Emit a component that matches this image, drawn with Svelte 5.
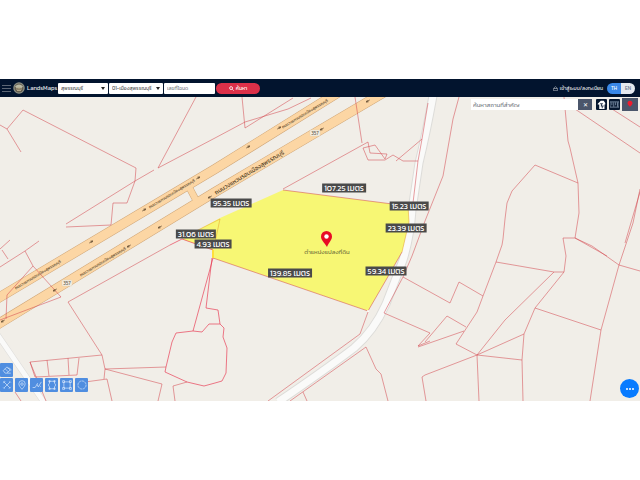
<script>
  const VIEW = { x: 0, y: 97, w: 640, h: 304 };

  const lines = [
    '111,225 113,203 127,203 135,181 136,168 23,110 7,129',
    '0,125 7,129 21,152',
    '66,224 135,181 154,170',
    '66,227 111,225',
    '196,97 158,168 215,138 245,122 288,109 311,98',
    '242,97 245,128 293,98',
    '0,249 10,240',
    '0,267 25,251 39,241',
    '2,250 8,259',
    '25,251 33,266 61,297 0,320',
    '33,266 7,295 6,319',
    '355,97 362,143',
    '283,189 368,142 370,153 387,154 385,159 375,145 363,148 368,160 385,160 393,155 403,161 418,161',
    '396,161 422,139',
    '428,103 422,139 418,161 413,203',
    '459,97 453,119 443,176 425,221 412,256 403,277 384,313 430,333 418,346 430,341',
    '403,277 450,303 459,282 483,296',
    '502,245 503,239 505,219 507,203 512,191 535,165 578,183',
    '564,97 568,141 570,148 578,183 579,213 575,238 563,238 566,256 564,272 535,308 524,334 522,360 523,401',
    '575,238 592,246 619,265 640,271',
    '575,238 607,256',
    '640,189 633,223 622,256 619,265 601,330 590,401',
    '640,192 625,243',
    '535,308 601,330',
    '575,109 640,153',
    '612,109 640,127',
    '502,245 496,262 483,296 477,312 456,344 477,355 479,401',
    '496,262 554,272 564,272',
    '554,272 505,320 477,355 524,334',
    '522,360 477,355 425,375 422,377 426,401',
    '418,347 464,331',
    '425,342 447,316 466,327',
    '368,312 360,334 268,401',
    '290,401 366,347 376,369 381,374 388,401',
    '303,392 307,401',
    '170,245 68,302 102,355 105,369 104,379',
    '35,377 30,362 102,355',
    '30,362 46,401',
    '35,377 77,375 79,358',
    '47,360 49,376',
    '68,358 69,375',
    '166,367 105,369 162,384 158,401',
    '85,382 107,379 112,401',
    '175,401 173,386 187,382',
    '15,392 21,401',
  ];

  const strongLines = [
    '170,245 182,239 213,250 213,258 193,331',
    '212,258 206,308 218,310 220,324',
    '193,331 176,333 172,342 166,367 165,372 187,382 204,386 215,383 222,381 226,373 227,348 223,337 224,328 220,324 209,324 202,332 193,331',
  ];

  const distances = [
    { x: 344, y: 188, value: '107.25' },
    { x: 231, y: 203, value: '95.35' },
    { x: 409, y: 206, value: '15.23' },
    { x: 406, y: 228, value: '23.39' },
    { x: 196, y: 234, value: '31.06' },
    { x: 213, y: 244, value: '4.93' },
    { x: 290, y: 273, value: '139.85' },
    { x: 386, y: 271, value: '59.34' },
  ];

  const ROAD = 'ถนนวงแหวนรอบเมืองสุพรรณบุรี';
  const roadNames = [
    { x: 172, y: 194 },
    { x: 305, y: 114 },
    { x: 249, y: 172, wide: true },
    { x: 38, y: 275 },
    { x: 103, y: 262 },
  ];

  const arrows = [
    { x: 91, y: 242, r: -31 },
    { x: 144, y: 210, r: -31 },
    { x: 198, y: 178, r: -31 },
    { x: 248, y: 147, r: -31 },
    { x: 279, y: 128, r: -31 },
    { x: 3, y: 321, r: 149 },
    { x: 55, y: 290, r: 149 },
    { x: 129, y: 246, r: 149 },
    { x: 160, y: 227, r: 149 },
    { x: 210, y: 197, r: 149 },
    { x: 322, y: 129, r: 149 },
    { x: 368, y: 101, r: 149 },
  ];

  const shields = [
    { x: 315, y: 133 },
    { x: 67, y: 283 },
  ];

  const tools = [
    { name: 'ล้าง', d: 'M3 3l10 10M13 3L3 13M5 2L2 5M11 14l3-3M2 3l2-1M12 2l2 2M2 12l2 2' },
    { name: 'หมุด', d: 'M8 15C5 11 3 9 3 6a5 5 0 0 1 10 0c0 3-2 5-5 9zM8 4.500a2 2 0 1 1 0 4a2 2 0 1 1 0-4' },
    { name: 'วัดระยะ', d: 'M1 12h4l3-5 2 4 5-8M8 7l1-2M12 9l2 2' },
    { name: 'รูปหลายเหลี่ยม', d: 'M4 2h8v3l2 3-2 3v3H4v-3L2 8l2-3zM3 1h2v2H3zM11 1h2v2h-2zM3 13h2v2H3zM11 13h2v2h-2z' },
    { name: 'สี่เหลี่ยม', d: 'M3 3h10v10H3zM1 1h3v3H1zM12 1h3v3h-3zM1 12h3v3H1zM12 12h3v3h-3z' },
    { name: 'วงกลม', d: 'M8 1.500a6.500 6.500 0 1 1 0 13a6.500 6.500 0 1 1 0-13', dash: '4 1' },
  ];

  let province = $state('สุพรรณบุรี');
  let district = $state('01-เมืองสุพรรณบุรี');
  let deed = $state('');
  let place = $state('');
  let lang = $state('TH');

  const left = (x) => ((x - VIEW.x) / VIEW.w) * 100;
  const top = (y) => ((y - VIEW.y) / VIEW.h) * 100;
</script>

<div class="page">
  <header class="navbar">
    <button class="menu" aria-label="เมนู"><span></span><span></span><span></span></button>
    <a class="brand" href="#home">
      <svg viewBox="0 0 24 24" aria-hidden="true">
        <circle cx="12" cy="12" r="11.500" fill="#8d9186" />
        <circle cx="12" cy="12" r="9" fill="#655f50" />
        <path d="M4 9q8-8 16 0l-3 3H7z" fill="#b9b9a4" />
        <path d="M6 14h12M8 17h8M9 10l3 3 3-3" stroke="#b5a887" stroke-width="2" fill="none" />
      </svg>
      LandsMaps
    </a>

    <form class="search" onsubmit={(e) => e.preventDefault()}>
      <div class="select province">
        <select bind:value={province} aria-label="จังหวัด">
          <option>สุพรรณบุรี</option>
        </select>
      </div>
      <div class="select district">
        <select bind:value={district} aria-label="อำเภอ">
          <option>01-เมืองสุพรรณบุรี</option>
        </select>
      </div>
      <input type="text" bind:value={deed} placeholder="เลขที่โฉนด" aria-label="เลขที่โฉนด" />
      <button class="submit">
        <svg viewBox="0 0 12 12" aria-hidden="true"><circle cx="5" cy="5" r="3.500" /><path d="M8 8l3 3" /></svg>
        ค้นหา
      </button>
    </form>

    <a class="login" href="#login">
      <svg viewBox="0 0 12 12" aria-hidden="true"><path d="M1 6h10v5H1zM3 6V4q3-5 6 0v2" /></svg>
      เข้าสู่ระบบ/ลงทะเบียน
    </a>
    <div class="lang">
      {#each ['TH', 'EN'] as code}
        <button class:active={lang === code} onclick={() => (lang = code)}>{code}</button>
      {/each}
    </div>
  </header>

  <main class="map">
    <svg class="canvas" viewBox="{VIEW.x} {VIEW.y} {VIEW.w} {VIEW.h}" aria-hidden="true">
      <rect x="0" y="97" width="640" height="304" fill="#f1eee8" />

      <path class="lane-edge" d="M-3 334L45 404" stroke-width="6" />
      <path class="lane" d="M-3 334L45 404" stroke-width="5" />
      <path class="lane-edge" d="M434 90Q427 130 419 163L412 210Q410 238 403 260L386 304Q374 331 354 348Q325 370 278 402" stroke-width="9" />
      <path class="lane" d="M434 90Q427 130 419 163L412 210Q410 238 403 260L386 304Q374 331 354 348Q325 370 278 402" stroke-width="7" />

      <g class="road-edge">
        <path d="M-10 303L215 169L347 87" />
        <path d="M-10 329L215 192L393 87" />
        <path class="link" d="M189 187L197 202" />
      </g>
      <g class="road">
        <path d="M-10 303L215 169L347 87" />
        <path d="M-10 329L215 192L393 87" />
        <path class="link" d="M188 185L198 204" />
      </g>

      {#each lines as points}
        <polyline class="boundary" {points} />
      {/each}
      <polygon class="parcel" points="283,190 408,206 409,222 402,252 386,280 368,311 213,258 213,250 182,239 220,218" />
      <polyline class="boundary" points="283,190 408,206" />
      <polyline class="boundary" points="402,252 386,280 368,311 213,258" />
      <polyline class="boundary orange" points="402,252 409,222 408,206" />
      <polyline class="boundary orange" points="182,238 220,219 214,247" />
      {#each strongLines as points}
        <polyline class="boundary strong" {points} />
      {/each}
      <path d="M213 250v8" stroke="#ffdf3a" stroke-width="2" />
      <circle cx="368" cy="311" r="1" fill="#fff" />

      {#each roadNames as { x, y, wide }}
        <text class="road-name" class:wide transform="translate({x} {y}) rotate(-31)">{ROAD}</text>
      {/each}
      {#each arrows as { x, y, r }}
        <path class="arrow" transform="translate({x} {y}) rotate({r})" d="M-2 0H2M0 -1L2 0L0 1" />
      {/each}
      {#each shields as { x, y }}
        <rect x={x - 5} y={y - 3} width="10" height="6" rx="1" fill="#f6f0e3" stroke="#ddd0bb" stroke-width=".5" />
        <text class="shield" {x} y={y + 2}>357</text>
      {/each}

      <path d="M327 247C324 242 321 240 321 236.500a5.500 5.500 0 0 1 11 0C332 240 329 242 327 247z" fill="#e80c25" />
      <circle cx="326.500" cy="236.500" r="2.200" fill="#fff" />
      <text class="parcel-name" x="327" y="254">ตำแหน่งแปลงที่ดิน</text>
    </svg>

    {#each distances as { x, y, value }}
      <span class="distance" style="left: {left(x)}%; top: {top(y)}%">{value} เมตร</span>
    {/each}

    <div class="places">
      <div class="place-search">
        <input type="text" bind:value={place} placeholder="ค้นหาสถานที่สำคัญ" aria-label="ค้นหาสถานที่สำคัญ" />
        <button aria-label="ล้างคำค้น" onclick={() => (place = '')}>✕</button>
      </div>
      <button class="layer" aria-label="สถานที่">
        <svg viewBox="0 0 12 12"><path d="M1 5l4-4h4l2 3v2h-1v6H3V6H1z" fill="#fff" /><path d="M4 5h4M6 5v3M5 8h4M7 8v3" stroke="#06172f" /></svg>
      </button>
      <button class="layer" aria-label="มาตราส่วน">
        <svg viewBox="0 0 12 12"><path d="M0 2.500h12v7H0zM2.500 3v4M5 3v6M7.500 3v4M10 3v6" fill="none" stroke="#8fa3bb" /></svg>
      </button>
      <button class="locate" aria-label="ตำแหน่งของฉัน">
        <svg viewBox="0 0 12 12"><path d="M6 1a3 3 0 0 1 3 3c0 2-2 3-3 4C5 7 3 6 3 4a3 3 0 0 1 3-3z" fill="#ee1c2e" /></svg>
      </button>
    </div>

    <div class="tools">
      <button aria-label="ลบ">
        <svg viewBox="0 0 16 16"><path d="M2 9l6-6 5 5-5 5H5zM5 6l5 5M8 13h6M9 5h3l2 2v2" /></svg>
      </button>
      <div class="tool-row">
        {#each tools as { name, d, dash }}
          <button aria-label={name}>
            <svg viewBox="0 0 16 16"><path {d} stroke-dasharray={dash} /></svg>
          </button>
        {/each}
      </div>
    </div>

    <button class="more" aria-label="เพิ่มเติม"><span></span><span></span><span></span></button>
  </main>
</div>

<style>
  :global(body) {
    margin: 0;
    background: #fff;
  }

  .page {
    min-height: 100vh;
    display: flex;
    flex-direction: column;
    justify-content: center;
    font-family: Kanit, Prompt, "Noto Sans Thai", "Noto Sans", sans-serif;
    font-size: 6px;
    line-height: 8px;
  }

  button, input, select {
    box-sizing: border-box;
    margin: 0;
    padding: 0;
    border: none;
    border-radius: 0;
    font: inherit;
  }
  button { cursor: pointer; }
  a { color: inherit; text-decoration: none; }

  .navbar {
    display: flex;
    align-items: center;
    height: 18px;
    padding: 0 5px 0 2px;
    background: #02142e;
    color: #fff;
    white-space: nowrap;
  }

  .menu {
    display: flex;
    flex-direction: column;
    gap: 2px;
    width: 9px;
    background: none;
  }
  .menu span { height: 1px; background: #5c6675; }

  .brand {
    display: flex;
    align-items: center;
    gap: 2px;
    width: 45px;
    margin-left: 2px;
    color: #e3e6ea;
  }
  .brand svg { width: 12px; height: 12px; flex: none; }

  .search {
    display: flex;
    gap: 1px;
    font-size: 5px;
  }
  .search input, .search select {
    width: 100%;
    height: 11px;
    padding: 0 3px;
    background: #fff;
    color: #555;
    border-radius: 1px;
  }
  .search input { width: 51px; }
  .search select { appearance: none; display: block; }
  .select { position: relative; }
  .select::after {
    content: '';
    position: absolute;
    right: 3px;
    top: 4px;
    border: 2px solid transparent;
    border-top: 3px solid #222;
    border-bottom: none;
  }
  .province { width: 50px; }
  .district { width: 54px; }
  input::placeholder { color: #7d838a; opacity: 1; }

  .submit {
    display: flex;
    align-items: center;
    justify-content: center;
    gap: 2px;
    width: 44px;
    height: 11px;
    border-radius: 6px;
    background: #dc3049;
    color: #fff;
  }
  .submit svg, .login svg {
    width: 5px;
    height: 5px;
    fill: none;
    stroke: #fff;
    stroke-width: 2;
  }
  .login svg { stroke-width: 1; }

  .login {
    display: flex;
    align-items: center;
    gap: 2px;
    margin-left: auto;
    margin-right: 4px;
    font-size: 5px;
    color: #e3e6ea;
  }

  .lang {
    display: flex;
    border-radius: 6px;
    overflow: hidden;
  }
  .lang button {
    width: 14px;
    height: 11px;
    background: #e4e9ef;
    color: #64748a;
    font-size: 5px;
  }
  .lang .active { background: #3988e8; color: #fff; }

  .map {
    position: relative;
    overflow: hidden;
  }
  .canvas {
    display: block;
    width: 100%;
    height: auto;
  }

  .lane, .lane-edge, .road, .road-edge { fill: none; }
  .lane { stroke: #fafaf9; }
  .lane-edge { stroke: #dddcd9; }
  .road { stroke: #fcd6a4; stroke-width: 9px; }
  .road-edge { stroke: #cfa678; stroke-width: 10px; }
  .road .link { stroke-width: 6px; }
  .road-edge .link { stroke-width: 7px; }
  .boundary {
    fill: none;
    stroke: #d2444c;
    stroke-opacity: .65;
    stroke-width: .8px;
  }
  .strong { stroke: #e8304a; stroke-opacity: .8; }
  .orange { stroke: #e5a12a; }
  .parcel { fill: #f7f774; }
  .arrow { fill: none; stroke: #5f4a30; stroke-width: .7px; }

  .road-name, .shield, .parcel-name { text-anchor: middle; }
  .road-name { font-size: 4px; fill: #4c3a22; dominant-baseline: central; }
  .road-name.wide { font-size: 6px; }
  .shield { font-size: 5px; fill: #6b6252; }
  .parcel-name { font-size: 6px; fill: #77773e; }

  .distance {
    position: absolute;
    transform: translate(-50%, -50%);
    padding: 0 2px;
    background: #4a4a4a;
    color: #fff;
    font-size: 8px;
    line-height: 9px;
    white-space: nowrap;
  }

  .places {
    position: absolute;
    top: 1px;
    right: 2px;
    display: flex;
    align-items: center;
    gap: 2px;
  }
  .place-search { display: flex; margin-right: 2px; }
  .place-search input {
    width: 107px;
    height: 11px;
    padding: 0 2px;
    background: #fff;
  }
  .place-search button, .locate {
    width: 14px;
    height: 11px;
    background: #4b566b;
    color: #fff;
  }
  .layer, .locate {
    display: grid;
    place-items: center;
  }
  .layer {
    width: 11px;
    height: 11px;
    border-radius: 1px;
    background: #06172f;
  }
  .layer svg { width: 9px; height: 9px; }
  .places .locate { width: 16px; height: 13px; }
  .locate svg { width: 10px; height: 10px; }

  .tools {
    position: absolute;
    left: 0;
    bottom: 9px;
    display: grid;
    gap: 1px;
  }
  .tool-row { display: flex; gap: 2px; }
  .tools button {
    display: grid;
    place-items: center;
    width: 13px;
    height: 14px;
    border-radius: 1px;
    background: #508ee0;
  }
  .tools svg {
    width: 10px;
    height: 10px;
    fill: none;
    stroke: #e6f0ff;
    stroke-width: 1px;
  }

  .more {
    position: absolute;
    right: 1px;
    bottom: 3px;
    display: flex;
    align-items: center;
    justify-content: center;
    gap: 1px;
    width: 19px;
    height: 19px;
    border-radius: 50%;
    background: #087bff;
  }
  .more span {
    width: 2px;
    height: 2px;
    border-radius: 50%;
    background: #fff;
  }
</style>
